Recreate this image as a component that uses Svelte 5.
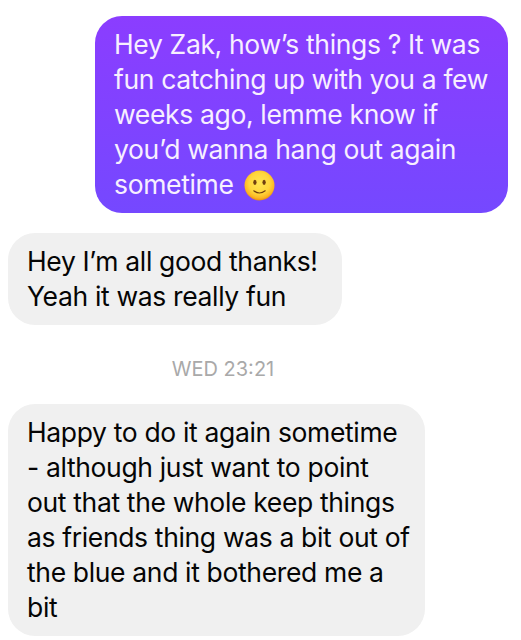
<script>
	const messages = [
		{
			sent: true,
			emoji: true,
			lines: [
				'Hey Zak, how’s things ? It was',
				'fun catching up with you a few',
				'weeks ago, lemme know if',
				'you’d wanna hang out again',
				'sometime',
			],
		},
		{
			lines: ['Hey I’m all good thanks!', 'Yeah it was really fun'],
		},
		{
			time: 'WED 23:21',
			lines: [
				'Happy to do it again sometime',
				'- although just want to point',
				'out that the whole keep things',
				'as friends thing was a bit out of',
				'the blue and it bothered me a',
				'bit',
			],
		},
	]
</script>

<style>
	:global(body) {
		background: #fff;
	}

	main {
		box-sizing: border-box;
		height: 640px;
		padding: 16px 13px 0 8px;
		display: flex;
		flex-direction: column;
		align-items: flex-start;
		overflow: hidden;
		font-family: Inter, "Liberation Sans", sans-serif;
	}

	.bubble {
		box-sizing: border-box;
		flex-shrink: 0;
		width: 417px;
		margin: 0;
		padding: 11px 19px;
		border-radius: 27px;
		background: #f0f0f0;
		color: #050505;
		font-size: 26.5px;
		line-height: 35px;
		letter-spacing: -0.35px;
		white-space: nowrap;
	}

	.short {
		width: 334px;
	}

	.sent {
		align-self: flex-end;
		width: 413px;
		margin-bottom: 19.5px;
		background: linear-gradient(#8b3dff, #7548ff);
		color: #f7efff;
	}

	.line {
		display: block;
	}

	time {
		width: 430px;
		height: 79.5px;
		padding-top: 1px;
		box-sizing: border-box;
		line-height: 87px;
		text-align: center;
		font-size: 20px;
		color: #a9a9a9;
	}

	svg {
		width: 31px;
		height: 31px;
		margin-left: 3px;
		vertical-align: -7px;
	}
</style>

<main>
	{#each messages as message}
		{#if message.time}
			<time>{message.time}</time>
		{/if}
		<p class="bubble" class:sent={message.sent} class:short={message.lines.length === 2}>
			{#each message.lines as line, i}
				<span class="line">
					{line}
					{#if message.emoji && i === message.lines.length - 1}
						<svg viewBox="0 0 31 31" role="img" aria-label="🙂">
							<defs>
								<radialGradient id="face" cx="50%" cy="42%" r="58%">
									<stop offset="0" stop-color="#ffe552" />
									<stop offset=".6" stop-color="#ffd63c" />
									<stop offset=".86" stop-color="#fbb623" />
									<stop offset="1" stop-color="#e98a12" />
								</radialGradient>
							</defs>
							<circle cx="15.5" cy="15.5" r="15" fill="url(#face)" />
							<ellipse cx="10.9" cy="12.3" rx="1.65" ry="2.6" fill="#704010" />
							<ellipse cx="20.1" cy="12.3" rx="1.65" ry="2.6" fill="#704010" />
							<path d="M9.8 20.8Q15.5 25.2 21.2 20.8" fill="none" stroke="#704010" stroke-width="1.2" stroke-linecap="round" />
						</svg>
					{/if}
				</span>
			{/each}
		</p>
	{/each}
</main>
